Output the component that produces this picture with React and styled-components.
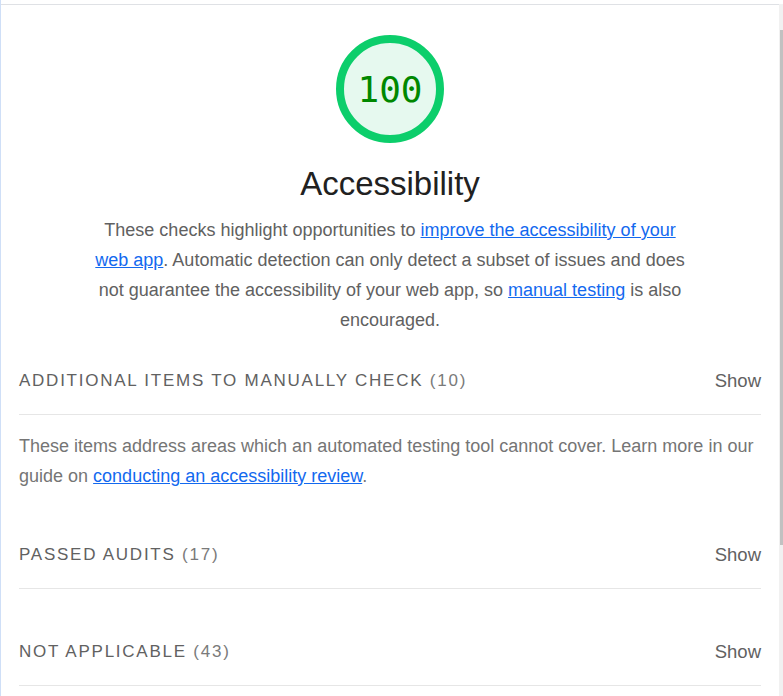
import styled, { createGlobalStyle } from "styled-components";

const GlobalStyle = createGlobalStyle`
  html, body {
    margin: 0;
    padding: 0;
    background: #fff;
  }
  body {
    font-family: "Liberation Sans", Arial, sans-serif;
  }
`;

const Frame = styled.div`
  display: flex;
  height: 696px;
  overflow: hidden;
  border-left: 1px solid #cfdff7;
  box-sizing: border-box;
`;

const Panel = styled.main`
  flex: 1;
  margin-top: 4px;
  border-top: 1px solid #dfe1e5;
  padding: 0 18px;
  min-width: 0;
`;

const ScrollTrack = styled.div`
  width: 4px;
  margin-top: 4px;
  background: #f1f1f1;
  display: flex;
  flex-direction: column;
`;

const ScrollThumb = styled.div`
  margin-top: 26px;
  margin-left: 1px;
  height: 515px;
  background: #c1c1c1;
`;

const Header = styled.header`
  display: flex;
  flex-direction: column;
  align-items: center;
  text-align: center;
`;

const Gauge = styled.div`
  margin-top: 30px;
  width: 108px;
  height: 108px;
  box-sizing: border-box;
  border: 8px solid #0cce6b;
  border-radius: 50%;
  background: #e6f9ef;
  display: flex;
  align-items: center;
  justify-content: center;
  font-family: "DejaVu Sans Mono", "Liberation Mono", monospace;
  font-size: 36px;
  color: #008800;
`;

const Title = styled.h1`
  margin: 21px 0 0;
  font-size: 33px;
  font-weight: 400;
  line-height: 40px;
  color: #212121;
`;

const Description = styled.p`
  margin: 11px 0 0;
  max-width: 600px;
  font-size: 18px;
  line-height: 30px;
  color: #616161;
`;

const Link = styled.a`
  color: #1369ef;
  text-decoration: underline;
`;

const Group = styled.section`
  margin-top: ${(p) => p.$top}px;
`;

const GroupHead = styled.div`
  display: flex;
  justify-content: space-between;
  align-items: center;
  padding-bottom: 18px;
  border-bottom: 1px solid #e6e6e6;
  line-height: 30px;
`;

const GroupTitle = styled.span`
  font-size: 17px;
  text-transform: uppercase;
  letter-spacing: 1.75px;
  color: #616161;
`;

const Count = styled.span`
  color: #7a7a7a;
`;

const Toggle = styled.span`
  font-size: 18.5px;
  color: #616161;
`;

const GroupText = styled.p`
  margin: 16px 0 0;
  font-size: 18px;
  line-height: 30px;
  color: #757575;
`;

const groups = [
  {
    title: "Additional items to manually check",
    count: 10,
    top: 31,
    text: (
      <>
        These items address areas which an automated testing tool cannot cover. Learn more in our guide on{" "}
        <Link href="#">conducting an accessibility review</Link>.
      </>
    ),
  },
  { title: "Passed audits", count: 17, top: 49 },
  { title: "Not applicable", count: 43, top: 48 },
];

export default function App() {
  return (
    <>
      <GlobalStyle />
      <Frame>
        <Panel>
          <Header>
            <Gauge>100</Gauge>
            <Title>Accessibility</Title>
            <Description>
              These checks highlight opportunities to{" "}
              <Link href="#">improve the accessibility of your web app</Link>. Automatic detection can only
              detect a subset of issues and does not guarantee the accessibility of your web app, so{" "}
              <Link href="#">manual testing</Link> is also encouraged.
            </Description>
          </Header>
          {groups.map((g) => (
            <Group key={g.title} $top={g.top}>
              <GroupHead>
                <GroupTitle>
                  {g.title} <Count>({g.count})</Count>
                </GroupTitle>
                <Toggle>Show</Toggle>
              </GroupHead>
              {g.text && <GroupText>{g.text}</GroupText>}
            </Group>
          ))}
        </Panel>
        <ScrollTrack>
          <ScrollThumb />
        </ScrollTrack>
      </Frame>
    </>
  );
}
